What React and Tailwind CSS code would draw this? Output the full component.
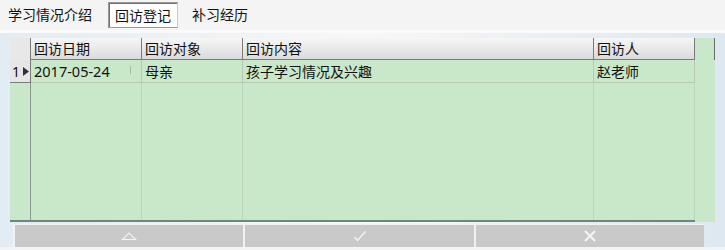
import React from "react";

const cjk = { fontFamily: '"Microsoft YaHei","Noto Sans CJK SC",sans-serif' };
const num = { fontFamily: '"Segoe UI","Noto Sans",sans-serif' };

function UpIcon() {
  return (
    <svg width="16" height="10" viewBox="0 0 16 10">
      <path d="M1.5 8.5 L8 2 L14.5 8.5 Z" fill="none" stroke="#f4f4f4" strokeWidth="1.2" />
    </svg>
  );
}
function CheckIcon() {
  return (
    <svg width="14" height="14" viewBox="0 0 14 14">
      <path d="M1.5 8 L4.5 11.5 L12.5 2.5" fill="none" stroke="#f4f4f4" strokeWidth="1.4" />
    </svg>
  );
}
function XIcon() {
  return (
    <svg width="14" height="14" viewBox="0 0 14 14">
      <path d="M2 2 L12 12 M12 2 L2 12" fill="none" stroke="#f4f4f4" strokeWidth="2.2" />
    </svg>
  );
}

const cols = [
  { w: "w-[111px]", h: "回访日期" },
  { w: "w-[101px]", h: "回访对象" },
  { w: "w-[351px]", h: "回访内容" },
  { w: "w-[101px]", h: "回访人" },
];

export default function App() {
  return (
    <div className="w-[725px] h-[250px] bg-[#f4f4f4] flex flex-col overflow-hidden text-[14px] text-[#111]" style={cjk}>
      {/* tabs */}
      <div className="h-[30px] flex items-start pl-[8px] bg-[#f4f4f4]">
        <div className="pt-[5px] h-[30px] leading-[18px] w-[100px]">学习情况介绍</div>
        <div className="mt-[2px] h-[26px] w-[70px] border border-[#9a9a9a] border-r-[#c8c8c8] bg-white flex items-center justify-center shadow-[inset_1px_1px_0_#707070]">
          <span className="pt-[1px]">回访登记</span>
        </div>
        <div className="pt-[5px] leading-[18px] ml-[14px]">补习经历</div>
      </div>

      {/* panel */}
      <div className="flex-1 flex flex-col bg-gradient-to-r from-[#e2ecf4] via-[#f7f7f7] to-[#dde8f1] border-t-[3px] border-[#fafafa]">
        <div className="flex pt-[5px] pl-[10px]">
          {/* grid */}
          <div className="w-[705px] h-[184px] bg-[#c9e8c9] flex flex-col relative">
            {/* header */}
            <div className="flex h-[22px] bg-gradient-to-b from-[#f6f6f6] to-[#dadada] shrink-0">
              <div className="w-[21px] border-r border-[#7a7a7a] bg-[#e8e8e8]" />
              {cols.map((c, i) => (
                <div key={i} className={`${c.w} border-r border-b border-[#7a7a7a] pl-[3px] leading-[21px]`}>{c.h}</div>
              ))}
              <div className="w-[20px] bg-[#c9e8c9] border-r border-[#6a6a6a] h-[22px]" />
            </div>
            {/* data row */}
            <div className="flex h-[23px] shrink-0">
              <div className="w-[21px] bg-[#e6e6e6] border-r border-b border-[#7a7a7a] flex items-center pl-[2px]">
                <span className="text-[14px]" style={num}>1</span>
                <svg width="6" height="9" viewBox="0 0 6 9" className="ml-[3px]"><path d="M0 0 L6 4.5 L0 9 Z" fill="#333" /></svg>
              </div>
              <div className="w-[111px] border-r border-b border-[#b5c9b5] pl-[3px] leading-[22px] text-[14.5px] relative" style={num}>
                2017-05-24
                <span className="absolute left-[99px] top-[6px] w-px h-[8px] bg-[#a8b8a8]" />
              </div>
              <div className="w-[101px] border-r border-b border-[#b5c9b5] pl-[3px] leading-[22px]">母亲</div>
              <div className="w-[351px] border-r border-b border-[#b5c9b5] pl-[3px] leading-[22px]">孩子学习情况及兴趣</div>
              <div className="w-[101px] border-r border-b border-[#b5c9b5] pl-[3px] leading-[22px]">赵老师</div>
            </div>
            {/* body with column lines */}
            <div className="flex flex-1">
              <div className="w-[21px] border-r border-[#8a9a8a]" />
              <div className="w-[111px] border-r border-[#bcd6bc]" />
              <div className="w-[101px] border-r border-[#bcd6bc]" />
              <div className="w-[351px] border-r border-[#bcd6bc]" />
              <div className="w-[101px] border-r border-[#bcd6bc]" />
            </div>
            <div className="h-[2px] w-[685px] bg-[#6f8580] shrink-0" />
          </div>
        </div>
        {/* buttons */}
        <div className="flex gap-[2px] mt-[2px] pt-[1px] pl-[2px] bg-[#f2f2f2] w-[691px] ml-[13px]">
          <div className="w-[228px] h-[22px] bg-[#c9c9c9] flex items-center justify-center"><UpIcon /></div>
          <div className="w-[229px] h-[22px] bg-[#c9c9c9] flex items-center justify-center"><CheckIcon /></div>
          <div className="w-[228px] h-[22px] bg-[#c9c9c9] flex items-center justify-center"><XIcon /></div>
        </div>
        <div className="flex-1 bg-[#f4f4f4]" />
      </div>
    </div>
  );
}
